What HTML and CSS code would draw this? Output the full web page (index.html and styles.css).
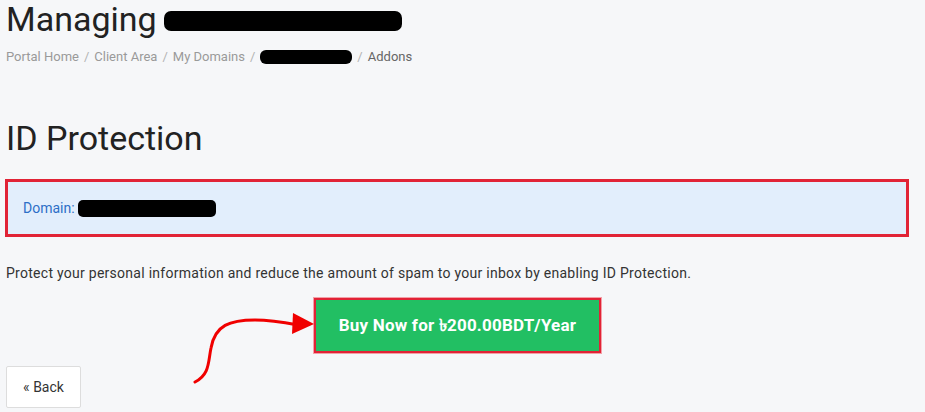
FILE: index.html
```html
<!DOCTYPE html>
<html lang="en">
  <head>
    <meta charset="UTF-8" />
    <meta name="viewport" content="width=device-width, initial-scale=1.0" />
    <title>ID Protection</title>
    <link rel="stylesheet" href="styles.css">
  </head>
  <body>
    <div class="page">
      <div class="header">
        <h1>Managing <span class="redact redact-title"></span></h1>
        <div class="breadcrumb">
          <a href="#">Portal Home</a><span class="sep">/</span>
          <a href="#">Client Area</a><span class="sep">/</span>
          <a href="#">My Domains</a><span class="sep">/</span>
          <span class="redact redact-crumb"></span><span class="sep">/</span>
          <span class="current">Addons</span>
        </div>
      </div>

      <h2>ID Protection</h2>

      <div class="alert">
        Domain: <span class="redact redact-domain"></span>
      </div>

      <p class="info">Protect your personal information and reduce the amount of spam to your inbox by enabling ID Protection.</p>

      <div class="buy-row">
        <button class="buyBtn">Buy Now for ৳200.00BDT/Year</button>
      </div>

      <button class="backBtn">&laquo; Back</button>

      <svg class="arrow" width="140" height="80" viewBox="0 0 140 80">
        <path d="M15 82 C 30 74, 28 62, 31 48 C 35 25, 50 20, 75 20 C 90 20, 102 22, 118 25" fill="none" stroke="#f00000" stroke-width="3" stroke-linecap="round" />
        <polygon points="113,13 134,24 112,34" fill="#f00000" />
      </svg>
    </div>
  </body>
</html>
```

FILE: styles.css
```css
body {
  margin: 0;
  padding: 0;
  background: #f6f7f9;
  font-family: Roboto, "Noto Sans", "DejaVu Sans", sans-serif;
  color: #333;
}

.page {
  position: relative;
  padding: 0 6px;
  height: 412px;
  overflow: hidden;
}

h1 {
  margin: 0;
  padding-top: 1px;
  font-size: 34px;
  font-weight: 400;
  line-height: 36px;
  color: #222;
}

.breadcrumb {
  margin-top: 12px;
  font-size: 13px;
  color: #9a9a9a;
  display: flex;
  align-items: center;
}

.breadcrumb a {
  color: #9a9a9a;
  text-decoration: none;
}

.breadcrumb .sep {
  margin: 0 5px;
  color: #b3b3b3;
}

.breadcrumb .current {
  color: #666;
}

.redact {
  display: inline-block;
  background: #000;
  border-radius: 7px;
  vertical-align: middle;
}

.redact-title {
  width: 238px;
  height: 20px;
  margin-left: -1px;
  position: relative;
  top: -1px;
}

.redact-crumb {
  width: 92px;
  height: 14px;
  border-radius: 6px;
}

.redact-domain {
  width: 138px;
  height: 17px;
  border-radius: 5px;
  margin-left: 0;
}

h2 {
  margin: 54px 0 0;
  font-size: 34px;
  font-weight: 400;
  line-height: 40px;
  color: #222;
}

.alert {
  margin: 21px 10px 0 -1px;
  height: 52px;
  border: 3px solid #e12336;
  background: #e2eefc;
  padding-left: 15px;
  display: flex;
  align-items: center;
  font-size: 14px;
  color: #2d6fc7;
  gap: 3px;
}

.info {
  margin: 27px 0 0;
  font-size: 14px;
  line-height: 18px;
  color: #333;
  letter-spacing: 0.27px;
}

.buy-row {
  margin-top: 16px;
  padding-left: 308px;
}

.buyBtn {
  width: 287px;
  height: 55px;
  border: 2px solid #e12336;
  outline: 1px solid #f4a0a8;
  background: #22bf63;
  color: #fff;
  font-family: Roboto, "DejaVu Sans", sans-serif;
  font-size: 17px;
  font-weight: 700;
  letter-spacing: 0.2px;
  cursor: pointer;
}

.backBtn {
  display: block;
  margin-top: 13px;
  width: 75px;
  height: 42px;
  background: #fff;
  border: 1px solid #ddd;
  border-radius: 2px;
  font-family: Roboto, sans-serif;
  font-size: 14px;
  color: #333;
  cursor: pointer;
}

.arrow {
  position: absolute;
  left: 180px;
  top: 300px;
  overflow: visible;
}
```
